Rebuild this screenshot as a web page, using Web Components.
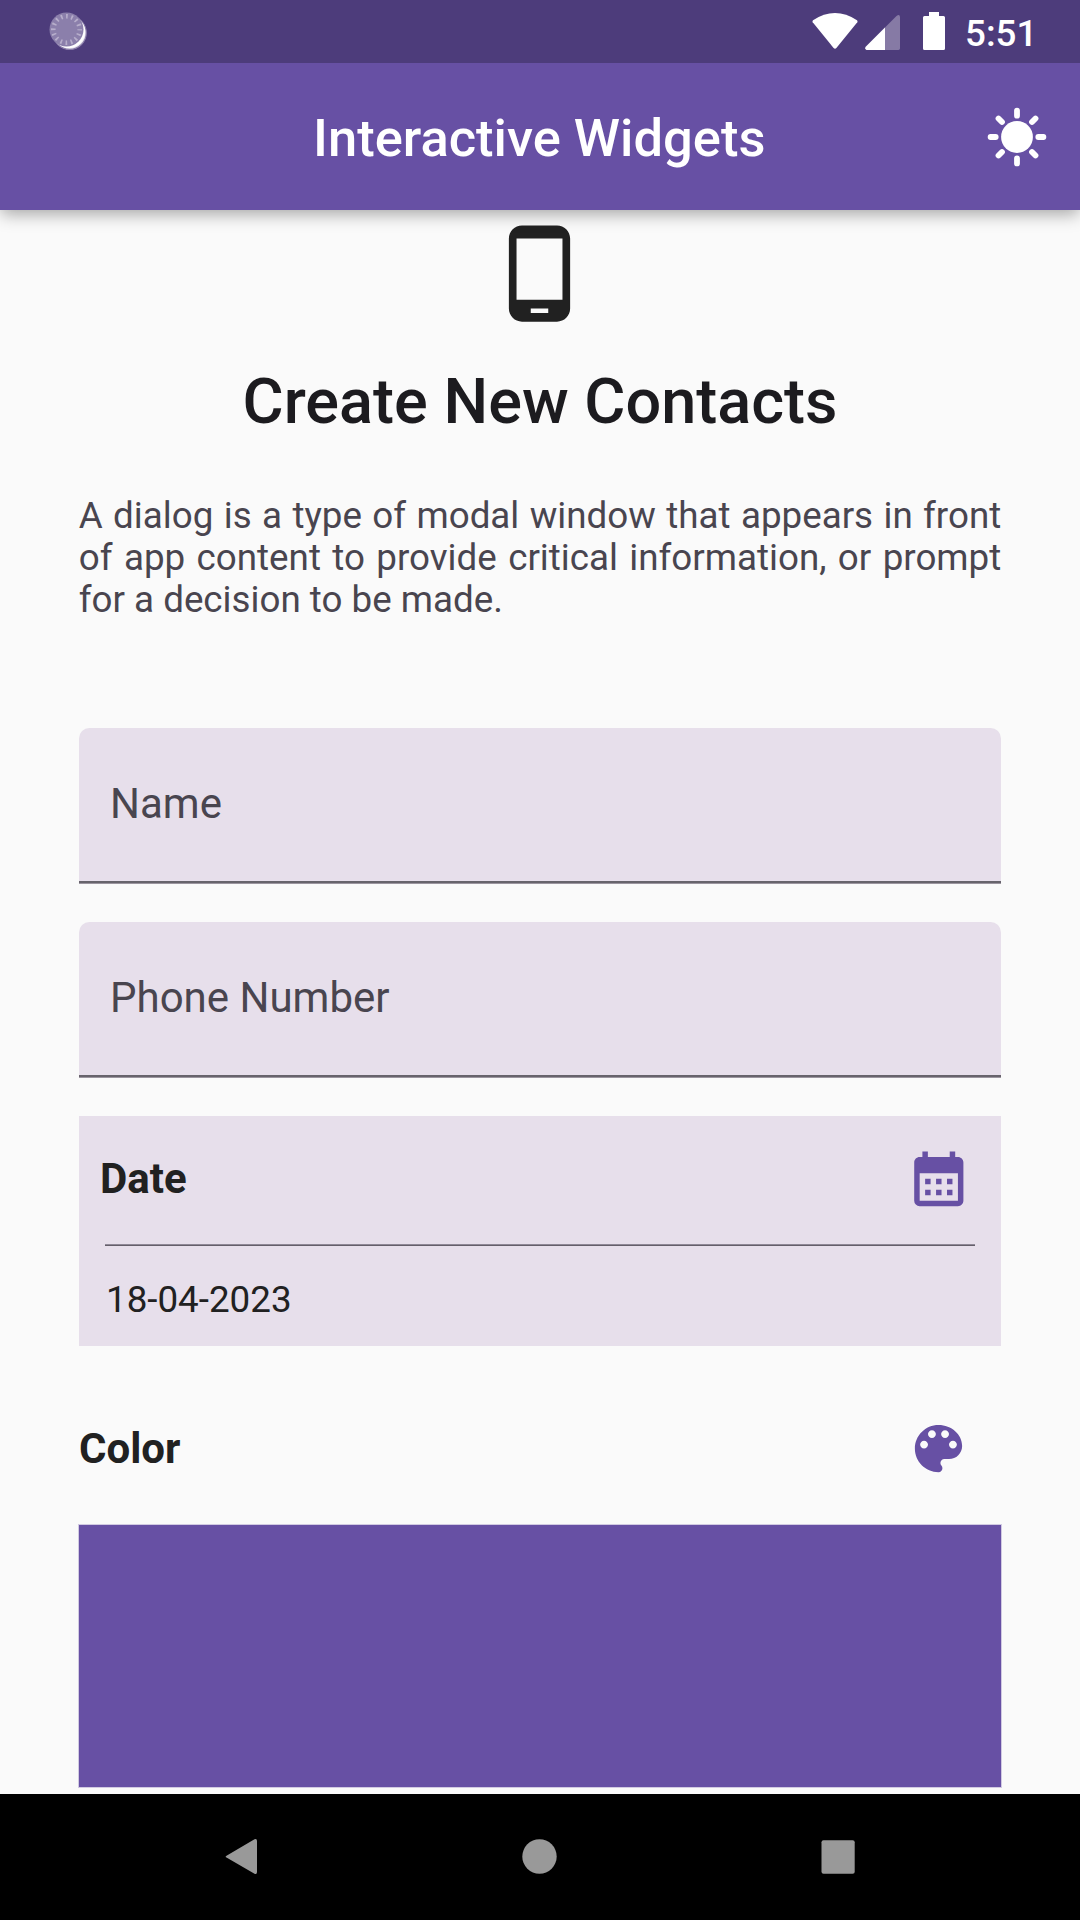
<!DOCTYPE html>
<html lang="en">
<head>
<meta charset="utf-8">
<title>Interactive Widgets</title>
<style>
html,body{margin:0;padding:0;background:#fafafa}
body{width:1080px;height:1920px;overflow:hidden;font-family:Roboto,"Liberation Sans",sans-serif;color:#212121}
</style>
</head>
<body>
<contacts-screen></contacts-screen>
<script>
const define = (name, html) => {
  const t = document.createElement('template');
  t.innerHTML = html;
  customElements.define(name, class extends HTMLElement {
    constructor() {
      super();
      this.attachShadow({ mode: 'open' }).appendChild(t.content.cloneNode(true));
    }
  });
};

define('status-bar', `
<style>
:host{display:flex;height:63px;background:#4d3c7b;color:#fff;justify-content:space-between;align-items:flex-start}
svg{display:block;flex:none}
.right{display:flex;align-items:flex-start}
.time{font-size:36.75px;font-weight:500;line-height:44px;padding-top:12px;width:115px}
</style>
<svg width="120" height="63" viewBox="0 0 120 63">
  <circle cx="69.700" cy="32.800" r="16.600" fill="#e9e6f0" stroke="#8a7da9" stroke-width="1.2"/>
  <circle cx="68.800" cy="31.800" r="16.300" fill="#fff"/>
  <circle cx="66.500" cy="29.500" r="17" fill="#8b7fab"/>
  <circle cx="66.500" cy="29.500" r="13.200" fill="none" stroke="#b7aecb" stroke-width="4.600" stroke-dasharray="1.700 3.484" stroke-dashoffset=".85"/>
</svg>
<div class="right">
<svg width="155" height="63" viewBox="810 0 155 63" fill="#fff">
  <path d="M813 20.200Q835 5.800 857 20.200Q858 21.200 857.300 22.300L836.400 48Q835 49.600 833.600 48L812.700 22.300Q812 21.200 813 20.200Z"/>
  <path d="M866.500 50Q864.300 48.800 865.500 47L896.500 16Q899.700 13.800 900 17V48.500Q899.900 49.900 898.500 50Z" opacity=".32"/>
  <path d="M866.500 50Q864.300 48.800 865.500 47L885 27.500V50Z"/>
  <path d="M929 12H939V16H943.500Q945 16 945 17.500V48.500Q945 50 943.500 50H924.500Q923 50 923 48.500V17.500Q923 16 924.500 16H929Z"/>
</svg>
<div class="time">5:51</div>
</div>`);

define('app-bar', `
<style>
:host{display:grid;grid-template-columns:126px 1fr 126px;height:147px;background:#6750a4;color:#fff;align-items:center;box-shadow:0 5px 16px -1px rgba(0,0,0,.35);clip-path:inset(0 0 -40px 0)}
.title{grid-column:2;text-align:center;font-size:52.5px;font-weight:500;line-height:62px;padding:3px 1.500px 0 0;white-space:nowrap}
svg{display:block;justify-self:center}
</style>
<div class="title"><slot></slot></div>
<svg width="64" height="64" viewBox="-32 -32 64 64" stroke="#fff" stroke-width="5.800" stroke-linecap="round">
  <circle r="15.900" fill="#fff" stroke="none"/>
  <path d="M0-21.300V-26.400M0 21.300V26.400M-21.300 0H-26.400M21.300 0H26.400M15-15L18.500-18.500M-15-15L-18.500-18.500M15 15L18.500 18.500M-15 15L-18.500 18.500"/>
</svg>`);

define('screen-intro', `
<style>
:host{display:flex;flex-direction:column;align-items:center}
svg{display:block;width:105px;height:105px;margin:10.600px .8px 0 0}
h1{margin:39px 0 0;font-size:63px;font-weight:500;line-height:74px;color:#1c1b1f;white-space:nowrap}
p{margin:56px 0 0;width:922.500px;font-size:36.750px;line-height:42px;text-align:justify;color:#49454f}
</style>
<svg viewBox="0 0 24 24" fill="#212121"><path d="M16 1H8C6.340 1 5 2.340 5 4v16c0 1.660 1.340 3 3 3h8c1.660 0 3-1.340 3-3V4c0-1.660-1.340-3-3-3zm-2 20h-4v-1h4v1zm3.250-3H6.750V4h10.500v14z"/></svg>
<h1><slot name="title"></slot></h1>
<p><slot name="text"></slot></p>`);

define('text-field', `
<style>
:host{display:flex;box-sizing:border-box;height:156px;padding:51px 31.250px 0 31px;border-radius:10.500px 10.500px 0 0;color:#49454f;font-size:42px;line-height:50px;background:linear-gradient(#67636c,#67636c) bottom/100% 2.600px no-repeat,#e7dfeb}
</style>
<slot></slot>`);

define('calendar-icon', `
<style>:host{display:block}svg{display:block}</style>
<svg width="65.600" height="65.600" viewBox="0 0 24 24" fill="#6750a4"><path d="M19 4h-1V2h-2v2H8V2H6v2H5c-1.110 0-1.990.9-1.990 2L3 20a2 2 0 0 0 2 2h14c1.100 0 2-.9 2-2V6c0-1.100-.9-2-2-2zm0 16H5V10h14v10zM9 14H7v-2h2v2zm4 0h-2v-2h2v2zm4 0h-2v-2h2v2zm-8 4H7v-2h2v2zm4 0h-2v-2h2v2zm4 0h-2v-2h2v2z"/></svg>`);

define('palette-icon', `
<style>:host{display:block}svg{display:block}</style>
<svg width="63" height="63" viewBox="0 0 24 24" fill="#6750a4"><path d="M12 3c-4.970 0-9 4.030-9 9s4.030 9 9 9c.83 0 1.500-.67 1.500-1.500 0-.39-.15-.74-.39-1.010-.23-.26-.38-.61-.38-.99 0-.83.67-1.500 1.500-1.500H16c2.760 0 5-2.240 5-5 0-4.420-4.030-8-9-8zm-5.500 9c-.83 0-1.500-.67-1.500-1.500S5.670 9 6.500 9 8 9.670 8 10.500 7.330 12 6.500 12zm3-4C8.670 8 8 7.330 8 6.500S8.670 5 9.500 5s1.500.67 1.500 1.500S10.330 8 9.500 8zm5 0c-.83 0-1.500-.67-1.500-1.500S13.670 5 14.500 5s1.500.67 1.500 1.500S15.330 8 14.500 8zm3 4c-.83 0-1.500-.67-1.500-1.500S16.670 9 17.500 9s1.500.67 1.500 1.500-.67 1.500-1.500 1.500z"/></svg>`);

define('date-card', `
<style>
:host{display:flex;flex-direction:column;box-sizing:border-box;height:230px;background:#e7dfeb}
.head{display:flex;justify-content:space-between;align-items:center;height:126px;padding:0 29.900px 0 21px}
b{font-size:42px;line-height:50px;font-weight:700;padding-bottom:1px}
.rule{height:2px;margin:2px 26px 0;background:linear-gradient(#8f8896 50%,#655f6a 50%)}
.value{padding:32px 27px 0;font-size:36.750px;line-height:44px}
</style>
<div class="head"><b><slot name="label"></slot></b><calendar-icon></calendar-icon></div>
<div class="rule"></div>
<div class="value"><slot name="value"></slot></div>`);

define('color-picker', `
<style>
:host{display:flex;flex-direction:column}
.head{display:flex;justify-content:space-between;align-items:center;height:63px;padding-right:31.500px}
b{font-size:42px;line-height:50px;font-weight:700}
.swatch{height:262px;margin-top:45px;background:#6750a4;box-shadow:0 0 0 1px rgba(103,80,164,.28)}
</style>
<div class="head"><b><slot></slot></b><palette-icon></palette-icon></div>
<div class="swatch"></div>`);

define('nav-bar', `
<style>
:host{display:flex;height:126px;background:#000;align-items:center;justify-content:space-between;box-sizing:border-box;padding:0 220px 0 220px}
svg{display:block}
</style>
<svg width="42" height="42" viewBox="0 0 42 42" fill="#999"><path d="M6.500 19.800L34.500 3.300Q37 2.300 37 5V36Q37 38.800 34.500 37.700L6.500 21.600Q4.800 20.700 6.500 19.800Z"/></svg>
<svg width="42" height="42" viewBox="0 0 42 42" fill="#999"><circle cx="20.500" cy="20.500" r="17.200"/></svg>
<svg width="42" height="42" viewBox="0 0 42 42" fill="#999"><rect x="3.500" y="4.300" width="33.200" height="33.400" rx="2"/></svg>`);

define('contacts-screen', `
<style>
:host{display:flex;flex-direction:column;width:1080px;height:1920px;background:#fafafa}
status-bar,app-bar,nav-bar{flex:none}
main{flex:1;min-height:0;padding:0 79px;display:flex;flex-direction:column}
screen-intro{margin:0 -.25px;height:518px;flex:none}
.fields{display:flex;flex-direction:column;gap:38px}
color-picker{margin-top:71px}
</style>
<status-bar></status-bar>
<app-bar>Interactive Widgets</app-bar>
<main>
  <screen-intro>
    <span slot="title">Create New Contacts</span>
    <span slot="text">A dialog is a type of modal window that appears in front of app content to provide critical information, or prompt for a decision to be made.</span>
  </screen-intro>
  <div class="fields">
    <text-field>Name</text-field>
    <text-field>Phone Number</text-field>
    <date-card><span slot="label">Date</span><span slot="value">18-04-2023</span></date-card>
  </div>
  <color-picker>Color</color-picker>
</main>
<nav-bar></nav-bar>`);
</script>
</body>
</html>
